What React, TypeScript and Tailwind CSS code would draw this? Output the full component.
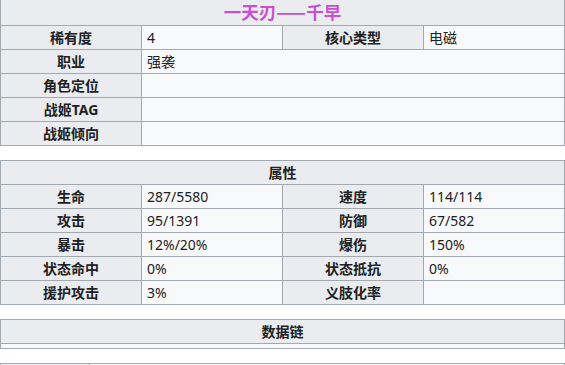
const border = "border-[#a2a9b1]";

type Cell = { text?: string; kind: "th" | "td"; span?: 1 | 2 | 3 | 4 };

const spanClass: Record<number, string> = {
  1: "col-span-1",
  2: "col-span-2",
  3: "col-span-3",
  4: "col-span-4",
};

function GridRow({ cells }: { cells: Cell[] }) {
  return (
    <>
      {cells.map((cell, i) => (
        <div
          key={i}
          className={`${spanClass[cell.span ?? 1]} flex h-6 items-center border-r border-b ${border} text-[14px] text-[#202122] ${
            cell.kind === "th" ? "justify-center bg-[#eaecf0] font-bold" : "bg-[#f8f9fa] pl-[5px]"
          }`}
        >
          {cell.text}
        </div>
      ))}
    </>
  );
}

const stats: [string, string, string, string][] = [
  ["生命", "287/5580", "速度", "114/114"],
  ["攻击", "95/1391", "防御", "67/582"],
  ["暴击", "12%/20%", "爆伤", "150%"],
  ["状态命中", "0%", "状态抵抗", "0%"],
  ["援护攻击", "3%", "义肢化率", ""],
];

export default function App() {
  return (
    <div className="w-[565px] overflow-hidden bg-white font-['Noto_Sans','Noto_Sans_CJK_SC',sans-serif]">
      {/* 基本信息 */}
      <div className={`-mt-px grid grid-cols-4 border-t border-l ${border}`}>
        <div
          className={`col-span-4 flex h-[26px] items-center justify-center border-r border-b ${border} bg-[#eaecf0] font-['Noto_Sans_CJK_SC',sans-serif] text-[17.5px] font-bold text-[#c94fcf]`}
        >
          一天刃——千早
        </div>
        <GridRow
          cells={[
            { text: "稀有度", kind: "th" },
            { text: "4", kind: "td" },
            { text: "核心类型", kind: "th" },
            { text: "电磁", kind: "td" },
          ]}
        />
        <GridRow cells={[{ text: "职业", kind: "th" }, { text: "强袭", kind: "td", span: 3 }]} />
        <GridRow cells={[{ text: "角色定位", kind: "th" }, { kind: "td", span: 3 }]} />
        <GridRow cells={[{ text: "战姬TAG", kind: "th" }, { kind: "td", span: 3 }]} />
        <GridRow cells={[{ text: "战姬倾向", kind: "th" }, { kind: "td", span: 3 }]} />
      </div>

      {/* 属性 */}
      <div className={`mt-[14px] grid grid-cols-4 border-t border-l ${border}`}>
        <GridRow cells={[{ text: "属性", kind: "th", span: 4 }]} />
        {stats.map(([a, b, c, d]) => (
          <GridRow
            key={a}
            cells={[
              { text: a, kind: "th" },
              { text: b, kind: "td" },
              { text: c, kind: "th" },
              { text: d, kind: "td" },
            ]}
          />
        ))}
      </div>

      {/* 数据链 */}
      <div className={`mt-[14px] border-t border-l ${border}`}>
        <div className={`flex h-6 items-center justify-center border-r border-b ${border} bg-[#eaecf0] text-[14px] font-bold text-[#202122]`}>
          数据链
        </div>
        <div className={`h-[5px] border-r border-b ${border} bg-[#f8f9fa]`} />
      </div>

      <div className={`mt-[14px] flex border-t border-l ${border}`}>
        <div className={`h-6 w-[89px] border-r border-b ${border} bg-[#eaecf0]`} />
        <div className={`h-6 flex-1 border-r border-b ${border} bg-[#f8f9fa]`} />
      </div>
    </div>
  );
}
